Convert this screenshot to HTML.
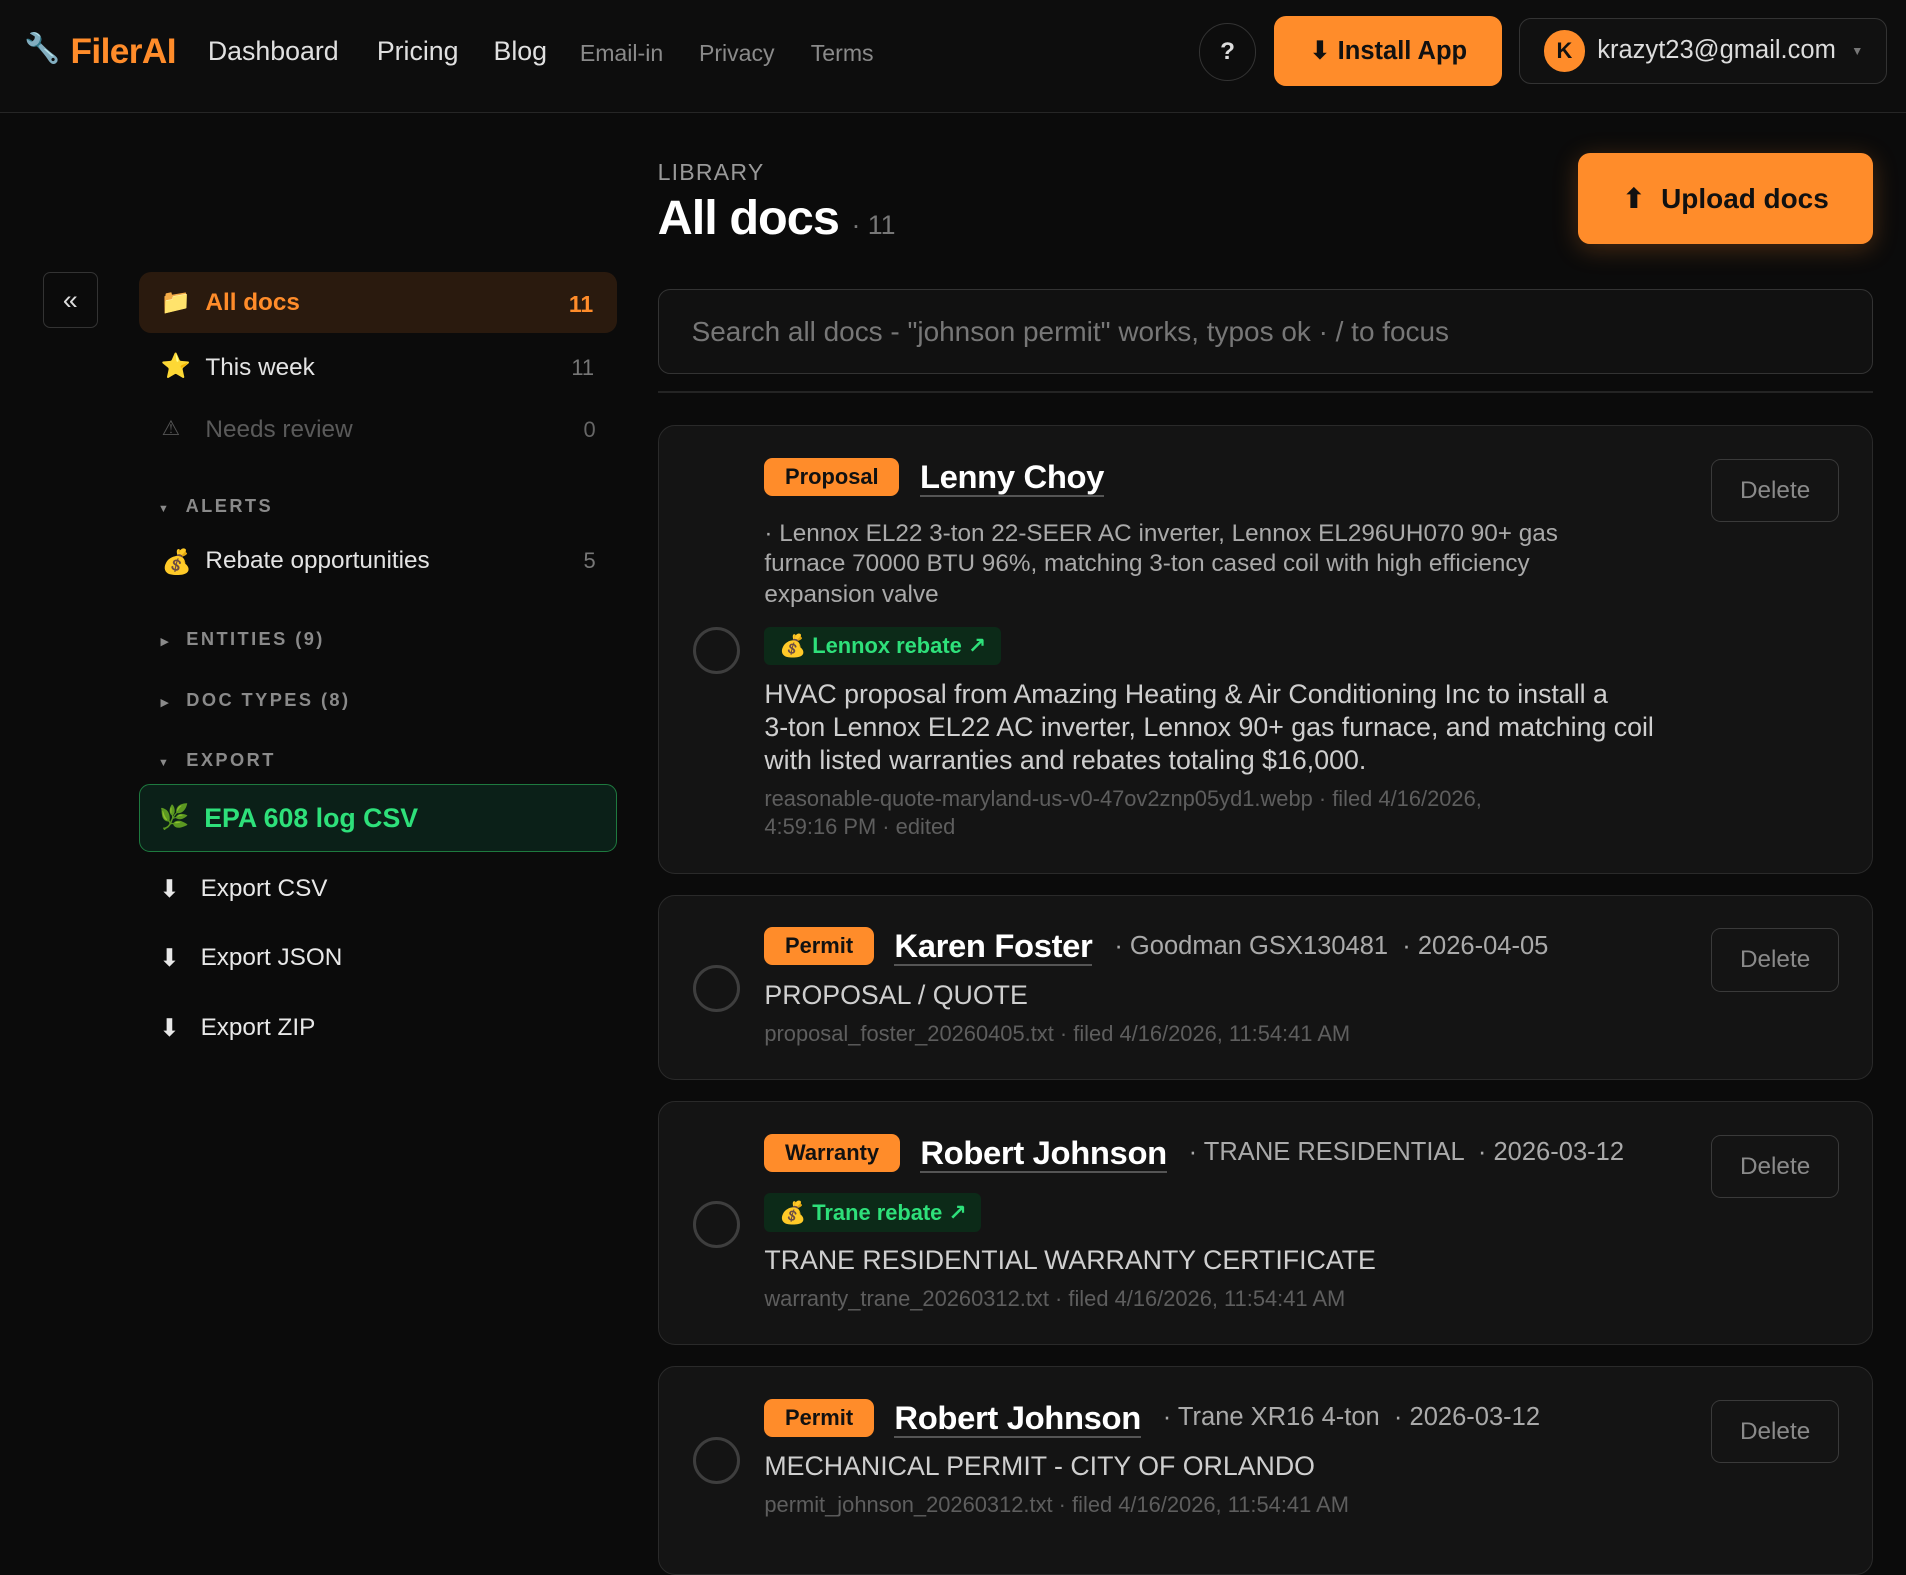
<!DOCTYPE html>
<html><head><meta charset="utf-8"><style>
html,body{margin:0;padding:0;background:#0b0b0b;}
body{width:1568px;height:1285px;overflow:hidden;zoom:1.21556;position:relative;font-family:"Liberation Sans","DejaVu Sans",sans-serif;color:#e8e8e8;}
.a{position:absolute;white-space:nowrap;}
.hdr{position:absolute;left:0;top:0;width:1568px;height:92px;background:#0d0d0d;border-bottom:1px solid #262626;}
.nav{font-size:22px;color:#e0e0e0;top:30px}
.nav2{font-size:19px;color:#8a8a8a;top:33px}
.btn{background:#ff8c2a;color:#111;font-weight:bold;border-radius:10px;display:flex;align-items:center;justify-content:center;}
.side{font-size:20px;}
.cnt{font-size:18px;color:#777;}
.sec{font-size:15px;font-weight:bold;letter-spacing:2px;color:#8a8a8a;}
.card{position:absolute;left:541px;width:998px;background:#141414;border:1px solid #2a2a2a;border-radius:14px;}
.chk{position:absolute;left:28px;width:34px;height:34px;border:2.5px solid #3e3e3e;border-radius:50%;}
.del{position:absolute;left:866px;top:27px;width:105px;height:52px;border:1.5px solid #3a3a3a;border-radius:8px;color:#8a8a8a;font-size:20px;display:flex;align-items:center;justify-content:center;box-sizing:border-box;}
.tag{display:inline-block;background:#ff8c2a;color:#111;font-weight:bold;font-size:18px;padding:5px 17px;border-radius:7px;vertical-align:middle;}
.nm{font-size:27px;font-weight:bold;color:#fff;border-bottom:2px solid #555;margin-left:17px;vertical-align:middle;letter-spacing:-.3px}
.meta{font-size:21px;color:#aaa;margin-left:18px;vertical-align:middle}
.body{font-size:22px;color:#cfcfcf;}
.fn{font-size:18px;color:#5e5e5e;line-height:23px}
.reb{display:inline-block;background:#0c2a18;color:#2ee07a;font-weight:bold;font-size:18px;padding:5px 12px;border-radius:5px;}
</style></head><body>
<div class="hdr"></div>
<div class="a" style="left:20px;top:26px;font-size:24px">🔧</div>
<div class="a" style="left:58px;top:26px;font-size:29px;font-weight:bold;color:#ff8c2a;letter-spacing:-.5px">FilerAI</div>
<div class="a nav" style="left:171px">Dashboard</div>
<div class="a nav" style="left:310px">Pricing</div>
<div class="a nav" style="left:406px">Blog</div>
<div class="a nav2" style="left:477px">Email-in</div>
<div class="a nav2" style="left:575px">Privacy</div>
<div class="a nav2" style="left:667px">Terms</div>
<div class="a" style="left:986px;top:19px;width:46px;height:46px;border:1.5px solid #333;border-radius:50%;display:flex;align-items:center;justify-content:center;font-weight:bold;font-size:20px;color:#ddd">?</div>
<div class="a btn" style="left:1048px;top:13px;width:188px;height:58px;font-size:21px">⬇&nbsp;Install App</div>
<div class="a" style="left:1250px;top:15px;width:302px;height:54px;border:1.5px solid #333;border-radius:10px;background:#111;box-sizing:border-box"></div>
<div class="a" style="left:1270px;top:25px;width:34px;height:34px;border-radius:50%;background:#ff8c2a;color:#111;font-weight:bold;font-size:18px;display:flex;align-items:center;justify-content:center">K</div>
<div class="a" style="left:1314px;top:30px;font-size:21px;color:#ddd">krazyt23@gmail.com</div>
<div class="a" style="left:1523px;top:36px;font-size:10px;color:#777">▼</div>

<div class="a" style="left:35px;top:224px;width:44px;height:44px;border:1.5px solid #333;border-radius:6px;display:flex;align-items:center;justify-content:center;font-size:22px;color:#ddd">«</div>
<div class="a" style="left:114px;top:224px;width:394px;height:50px;background:#2a1a0e;border-radius:10px"></div>
<div class="a side" style="left:132px;top:236px">📁</div>
<div class="a side" style="left:169px;top:238px;color:#ff8c2a;font-weight:bold">All docs</div>
<div class="a" style="left:468px;top:239px;font-size:19px;color:#ff8c2a;font-weight:bold">11</div>
<div class="a side" style="left:132px;top:289px">⭐</div>
<div class="a side" style="left:169px;top:291px;color:#e4e4e4">This week</div>
<div class="a cnt" style="left:470px;top:292px">11</div>
<div class="a side" style="left:133px;top:342px;color:#555;font-size:17px">⚠</div>
<div class="a side" style="left:169px;top:342px;color:#5a5a5a">Needs review</div>
<div class="a cnt" style="left:480px;top:343px;color:#666">0</div>
<div class="a sec" style="left:130px;top:407px"><span style="font-size:9px">▼</span>&nbsp; ALERTS</div>
<div class="a side" style="left:133px;top:450px">💰</div>
<div class="a side" style="left:169px;top:450px;color:#e4e4e4">Rebate opportunities</div>
<div class="a cnt" style="left:480px;top:451px">5</div>
<div class="a sec" style="left:132px;top:517px"><span style="font-size:9px">▶</span>&nbsp; ENTITIES (9)</div>
<div class="a sec" style="left:132px;top:567px"><span style="font-size:9px">▶</span>&nbsp; DOC TYPES (8)</div>
<div class="a sec" style="left:130px;top:616px"><span style="font-size:9px">▼</span>&nbsp; EXPORT</div>
<div class="a" style="left:114px;top:645px;width:394px;height:56px;background:#0b2018;border:1.5px solid #1e7a3f;border-radius:9px;box-sizing:border-box"></div>
<div class="a side" style="left:131px;top:660px">🌿</div>
<div class="a" style="left:168px;top:661px;font-size:22px;font-weight:bold;color:#2ee07a">EPA 608 log CSV</div>
<div class="a side" style="left:131px;top:719px">⬇</div><div class="a side" style="left:165px;top:720px">Export CSV</div>
<div class="a side" style="left:131px;top:776px">⬇</div><div class="a side" style="left:165px;top:777px">Export JSON</div>
<div class="a side" style="left:131px;top:833px">⬇</div><div class="a side" style="left:165px;top:834px">Export ZIP</div>

<div class="a" style="left:541px;top:131px;font-size:19px;color:#999;letter-spacing:1px">LIBRARY</div>
<div class="a" style="left:541px;top:156px;font-size:40px;font-weight:bold;color:#fff;letter-spacing:-.8px">All docs <span style="font-size:22px;color:#777;font-weight:normal;letter-spacing:0">· 11</span></div>
<div class="a btn" style="left:1298px;top:126px;width:243px;height:75px;font-size:23px;box-shadow:0 4px 20px rgba(255,140,42,.25)">⬆&nbsp;&nbsp;Upload docs</div>
<div class="a" style="left:541px;top:238px;width:1000px;height:70px;border:1.5px solid #333;border-radius:10px;background:#111;box-sizing:border-box"></div>
<div class="a" style="left:569px;top:260px;font-size:23px;color:#777">Search all docs - "johnson permit" works, typos ok · / to focus</div>
<div class="a" style="left:541px;top:322px;width:1000px;height:1px;background:#242424"></div>

<div class="card" style="top:350px;height:367px">
 <div class="chk" style="top:165px"></div>
 <div class="del">Delete</div>
 <div class="a" style="left:87px;top:26px"><span class="tag">Proposal</span><span class="nm">Lenny Choy</span></div>
 <div class="a" style="left:87px;top:76px;width:715px;white-space:normal;font-size:20px;color:#aaa;line-height:25px">· Lennox EL22 3-ton 22-SEER AC inverter, Lennox EL296UH070 90+ gas furnace 70000 BTU 96%, matching 3-ton cased coil with high efficiency expansion valve</div>
 <div class="a" style="left:87px;top:165px"><span class="reb">💰 Lennox rebate ↗</span></div>
 <div class="a body" style="left:87px;top:207px;width:740px;white-space:normal;line-height:27px">HVAC proposal from Amazing Heating &amp; Air Conditioning Inc to install a 3&#8209;ton Lennox EL22 AC inverter, Lennox 90+ gas furnace, and matching coil with listed warranties and rebates totaling $16,000.</div>
 <div class="a fn" style="left:87px;top:295px;width:640px;white-space:normal">reasonable-quote-maryland-us-v0-47ov2znp05yd1.webp · filed 4/16/2026, 4:59:16 PM · edited</div>
</div>

<div class="card" style="top:736px;height:151px">
 <div class="chk" style="top:57px"></div>
 <div class="del">Delete</div>
 <div class="a" style="left:87px;top:26px"><span class="tag">Permit</span><span class="nm">Karen Foster</span><span class="meta">· Goodman GSX130481 &nbsp;· 2026-04-05</span></div>
 <div class="a body" style="left:87px;top:69px">PROPOSAL / QUOTE</div>
 <div class="a fn" style="left:87px;top:102px">proposal_foster_20260405.txt · filed 4/16/2026, 11:54:41 AM</div>
</div>

<div class="card" style="top:906px;height:199px">
 <div class="chk" style="top:81px"></div>
 <div class="del">Delete</div>
 <div class="a" style="left:87px;top:26px"><span class="tag">Warranty</span><span class="nm">Robert Johnson</span><span class="meta">· TRANE RESIDENTIAL &nbsp;· 2026-03-12</span></div>
 <div class="a" style="left:87px;top:75px"><span class="reb">💰 Trane rebate ↗</span></div>
 <div class="a body" style="left:87px;top:117px">TRANE RESIDENTIAL WARRANTY CERTIFICATE</div>
 <div class="a fn" style="left:87px;top:150px">warranty_trane_20260312.txt · filed 4/16/2026, 11:54:41 AM</div>
</div>

<div class="card" style="top:1124px;height:170px">
 <div class="chk" style="top:57px"></div>
 <div class="del">Delete</div>
 <div class="a" style="left:87px;top:26px"><span class="tag">Permit</span><span class="nm">Robert Johnson</span><span class="meta">· Trane XR16 4-ton &nbsp;· 2026-03-12</span></div>
 <div class="a body" style="left:87px;top:69px">MECHANICAL PERMIT - CITY OF ORLANDO</div>
 <div class="a fn" style="left:87px;top:102px">permit_johnson_20260312.txt · filed 4/16/2026, 11:54:41 AM</div>
</div>
</body></html>
